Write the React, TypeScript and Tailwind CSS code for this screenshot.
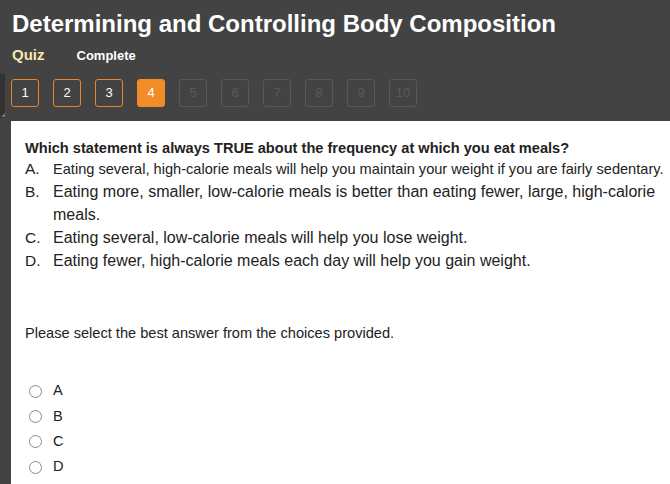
const pages = [1, 2, 3, 4, 5, 6, 7, 8, 9, 10];
const current = 4;

const choices = [
  ["A.", "Eating several, high-calorie meals will help you maintain your weight if you are fairly sedentary."],
  ["B.", "Eating more, smaller, low-calorie meals is better than eating fewer, large, high-calorie meals."],
  ["C.", "Eating several, low-calorie meals will help you lose weight."],
  ["D.", "Eating fewer, high-calorie meals each day will help you gain weight."],
];

function PageButton({ n }: { n: number }) {
  const done = n < current;
  const active = n === current;
  const cls = active
    ? "bg-[#f48b29] border-[#f48b29] text-white"
    : done
      ? "border-[#e8852b] text-white"
      : "border-[#585858] text-[#5a5a5a]";
  return (
    <div
      className={`w-[28px] h-[28px] border rounded-[3px] flex items-center justify-center text-[13px] ${cls}`}
    >
      {n}
    </div>
  );
}

export default function App() {
  return (
    <div className="w-[670px] h-[484px] overflow-hidden bg-[#434343] font-['Liberation_Sans',Arial,sans-serif] relative">
      <div className="px-[12px] pt-[9px]">
        <h1 className="text-white font-bold text-[24px] leading-[29px]">
          Determining and Controlling Body Composition
        </h1>
        <div className="flex items-baseline mt-[6px]">
          <span className="text-[#f6e7ad] font-bold text-[15px]">Quiz</span>
          <span className="text-white font-bold text-[13px] ml-[32px]">Complete</span>
        </div>
        <div className="flex gap-[14px] mt-[12px] ml-[-1px]">
          {pages.map((n) => (
            <PageButton key={n} n={n} />
          ))}
        </div>
      </div>
      <div className="absolute left-0 top-[74px] w-[5px] h-[44px] bg-[#333333]">
        <div className="absolute bottom-[1px] right-0 w-0 h-0 border-l-[4px] border-l-transparent border-b-[4px] border-b-[#777]" />
      </div>
      <div className="ml-[11px] mt-[14px] bg-white h-[400px] pl-[14px] pr-[4px] pt-[18px] text-[#222]">
        <p className="font-bold text-[14.6px] leading-[18px]">
          Which statement is always TRUE about the frequency at which you eat meals?
        </p>
        <div className="mt-[2px]">
          {choices.map(([l, t], i) => (
            <div
              key={l}
              className={`flex ${i === 0 ? "text-[14.6px] leading-[20px] mb-[1px]" : "text-[16px] leading-[23px]"}`}
            >
              <span className="w-[28px] shrink-0 text-[15.5px]">{l}</span>
              <span>{t}</span>
            </div>
          ))}
        </div>
        <p className="text-[14.6px] mt-[52px] leading-[18px]">
          Please select the best answer from the choices provided.
        </p>
        <div className="mt-[37px] flex flex-col">
          {["A", "B", "C", "D"].map((c) => (
            <div key={c} className="flex items-center text-[14.6px] h-[25.3px]">
              <span className="ml-[4px] w-[13px] h-[13px] rounded-full border border-[#8a8a8a] bg-white" />
              <span className="ml-[11px]">{c}</span>
            </div>
          ))}
        </div>
      </div>
    </div>
  );
}
